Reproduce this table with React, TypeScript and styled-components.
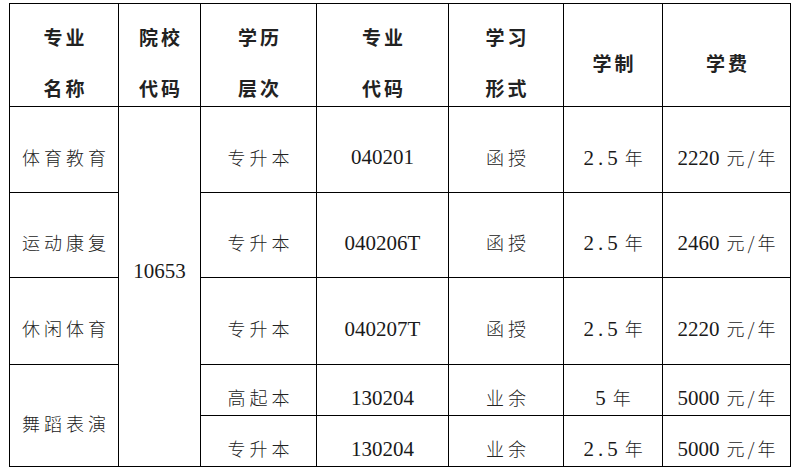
import React from "react";
import styled, { createGlobalStyle } from "styled-components";

const GlobalStyle = createGlobalStyle`
  html, body {
    margin: 0;
    padding: 0;
    background: #fff;
  }
`;

const Page = styled.div`
  padding: 3px 0 0 9px;
  width: 796px;
  height: 472px;
  box-sizing: border-box;
  overflow: hidden;
`;

const Table = styled.table`
  border-collapse: collapse;
  table-layout: fixed;
  width: 782px;
  color: #1a1a1a;
  font-family: "Noto Sans CJK SC", sans-serif;
`;

const Row = styled.tr<{ $h: number }>`
  height: ${({ $h }) => $h}px;
`;

const HeadCell = styled.th`
  border: 1.5px solid #000;
  padding: 15px 0 0;
  vertical-align: middle;
  text-align: center;
  font-size: 19px;
  font-weight: 700;
  color: #222;
`;

const HeadStack = styled.div`
  display: flex;
  flex-direction: column;
  align-items: center;
  gap: 21px;
`;

const HeadLine = styled.span`
  line-height: 30px;
  letter-spacing: 3px;
  margin-right: -3px;
`;

const Cell = styled.td<{ $lift?: number }>`
  border: 1.5px solid #000;
  padding: ${({ $lift }) => ($lift ? `0 0 ${$lift}px` : "15px 0 0")};
  vertical-align: middle;
  text-align: center;
  line-height: 28px;
  white-space: nowrap;
`;

const Han = styled.span<{ $gap?: number }>`
  font-family: "Noto Sans CJK SC", sans-serif;
  font-size: 18px;
  font-weight: 300;
  color: #222;
  letter-spacing: 4px;
  margin-right: -4px;
  margin-left: ${({ $gap }) => $gap ?? 0}px;
`;

const Fee = styled(Han)`
  letter-spacing: 3px;
  margin-right: -3px;
`;

const Num = styled.span<{ $spread?: boolean }>`
  font-family: "Liberation Serif", "Times New Roman", serif;
  font-size: 21px;
  color: #1a1a1a;
  letter-spacing: ${({ $spread }) => ($spread ? "4px" : "0")};
`;

const widths = [109, 82, 116, 132, 115, 99, 128];

const heads: string[][] = [
  ["专业", "名称"],
  ["院校", "代码"],
  ["学历", "层次"],
  ["专业", "代码"],
  ["学习", "形式"],
  ["学制"],
  ["学费"],
];

type Course = {
  name?: string;
  nameSpan?: number;
  level: string;
  code: string;
  mode: string;
  years: string;
  fee: string;
  h: number;
};

const courses: Course[] = [
  { name: "体育教育", level: "专升本", code: "040201", mode: "函授", years: "2.5", fee: "2220", h: 86 },
  { name: "运动康复", level: "专升本", code: "040206T", mode: "函授", years: "2.5", fee: "2460", h: 85 },
  { name: "休闲体育", level: "专升本", code: "040207T", mode: "函授", years: "2.5", fee: "2220", h: 87 },
  { name: "舞蹈表演", nameSpan: 2, level: "高起本", code: "130204", mode: "业余", years: "5", fee: "5000", h: 51 },
  { level: "专升本", code: "130204", mode: "业余", years: "2.5", fee: "5000", h: 51 },
];

export default function App() {
  return (
    <>
      <GlobalStyle />
      <Page>
        <Table>
          <colgroup>
            {widths.map((w, i) => (
              <col key={i} style={{ width: w }} />
            ))}
          </colgroup>
          <tbody>
            <Row $h={103}>
              {heads.map((lines, i) => (
                <HeadCell key={i}>
                  <HeadStack>
                    {lines.map((l) => (
                      <HeadLine key={l}>{l}</HeadLine>
                    ))}
                  </HeadStack>
                </HeadCell>
              ))}
            </Row>
            {courses.map((c, i) => (
              <Row key={i} $h={c.h}>
                {c.name && (
                  <Cell rowSpan={c.nameSpan}>
                    <Han>{c.name}</Han>
                  </Cell>
                )}
                {i === 0 && (
                  <Cell rowSpan={courses.length} $lift={32}>
                    <Num>10653</Num>
                  </Cell>
                )}
                <Cell>
                  <Han>{c.level}</Han>
                </Cell>
                <Cell>
                  <Num>{c.code}</Num>
                </Cell>
                <Cell>
                  <Han>{c.mode}</Han>
                </Cell>
                <Cell>
                  <Num $spread>{c.years}</Num>
                  <Han $gap={3}>年</Han>
                </Cell>
                <Cell>
                  <Num>{c.fee}</Num>
                  <Fee $gap={7}>元/年</Fee>
                </Cell>
              </Row>
            ))}
          </tbody>
        </Table>
      </Page>
    </>
  );
}
